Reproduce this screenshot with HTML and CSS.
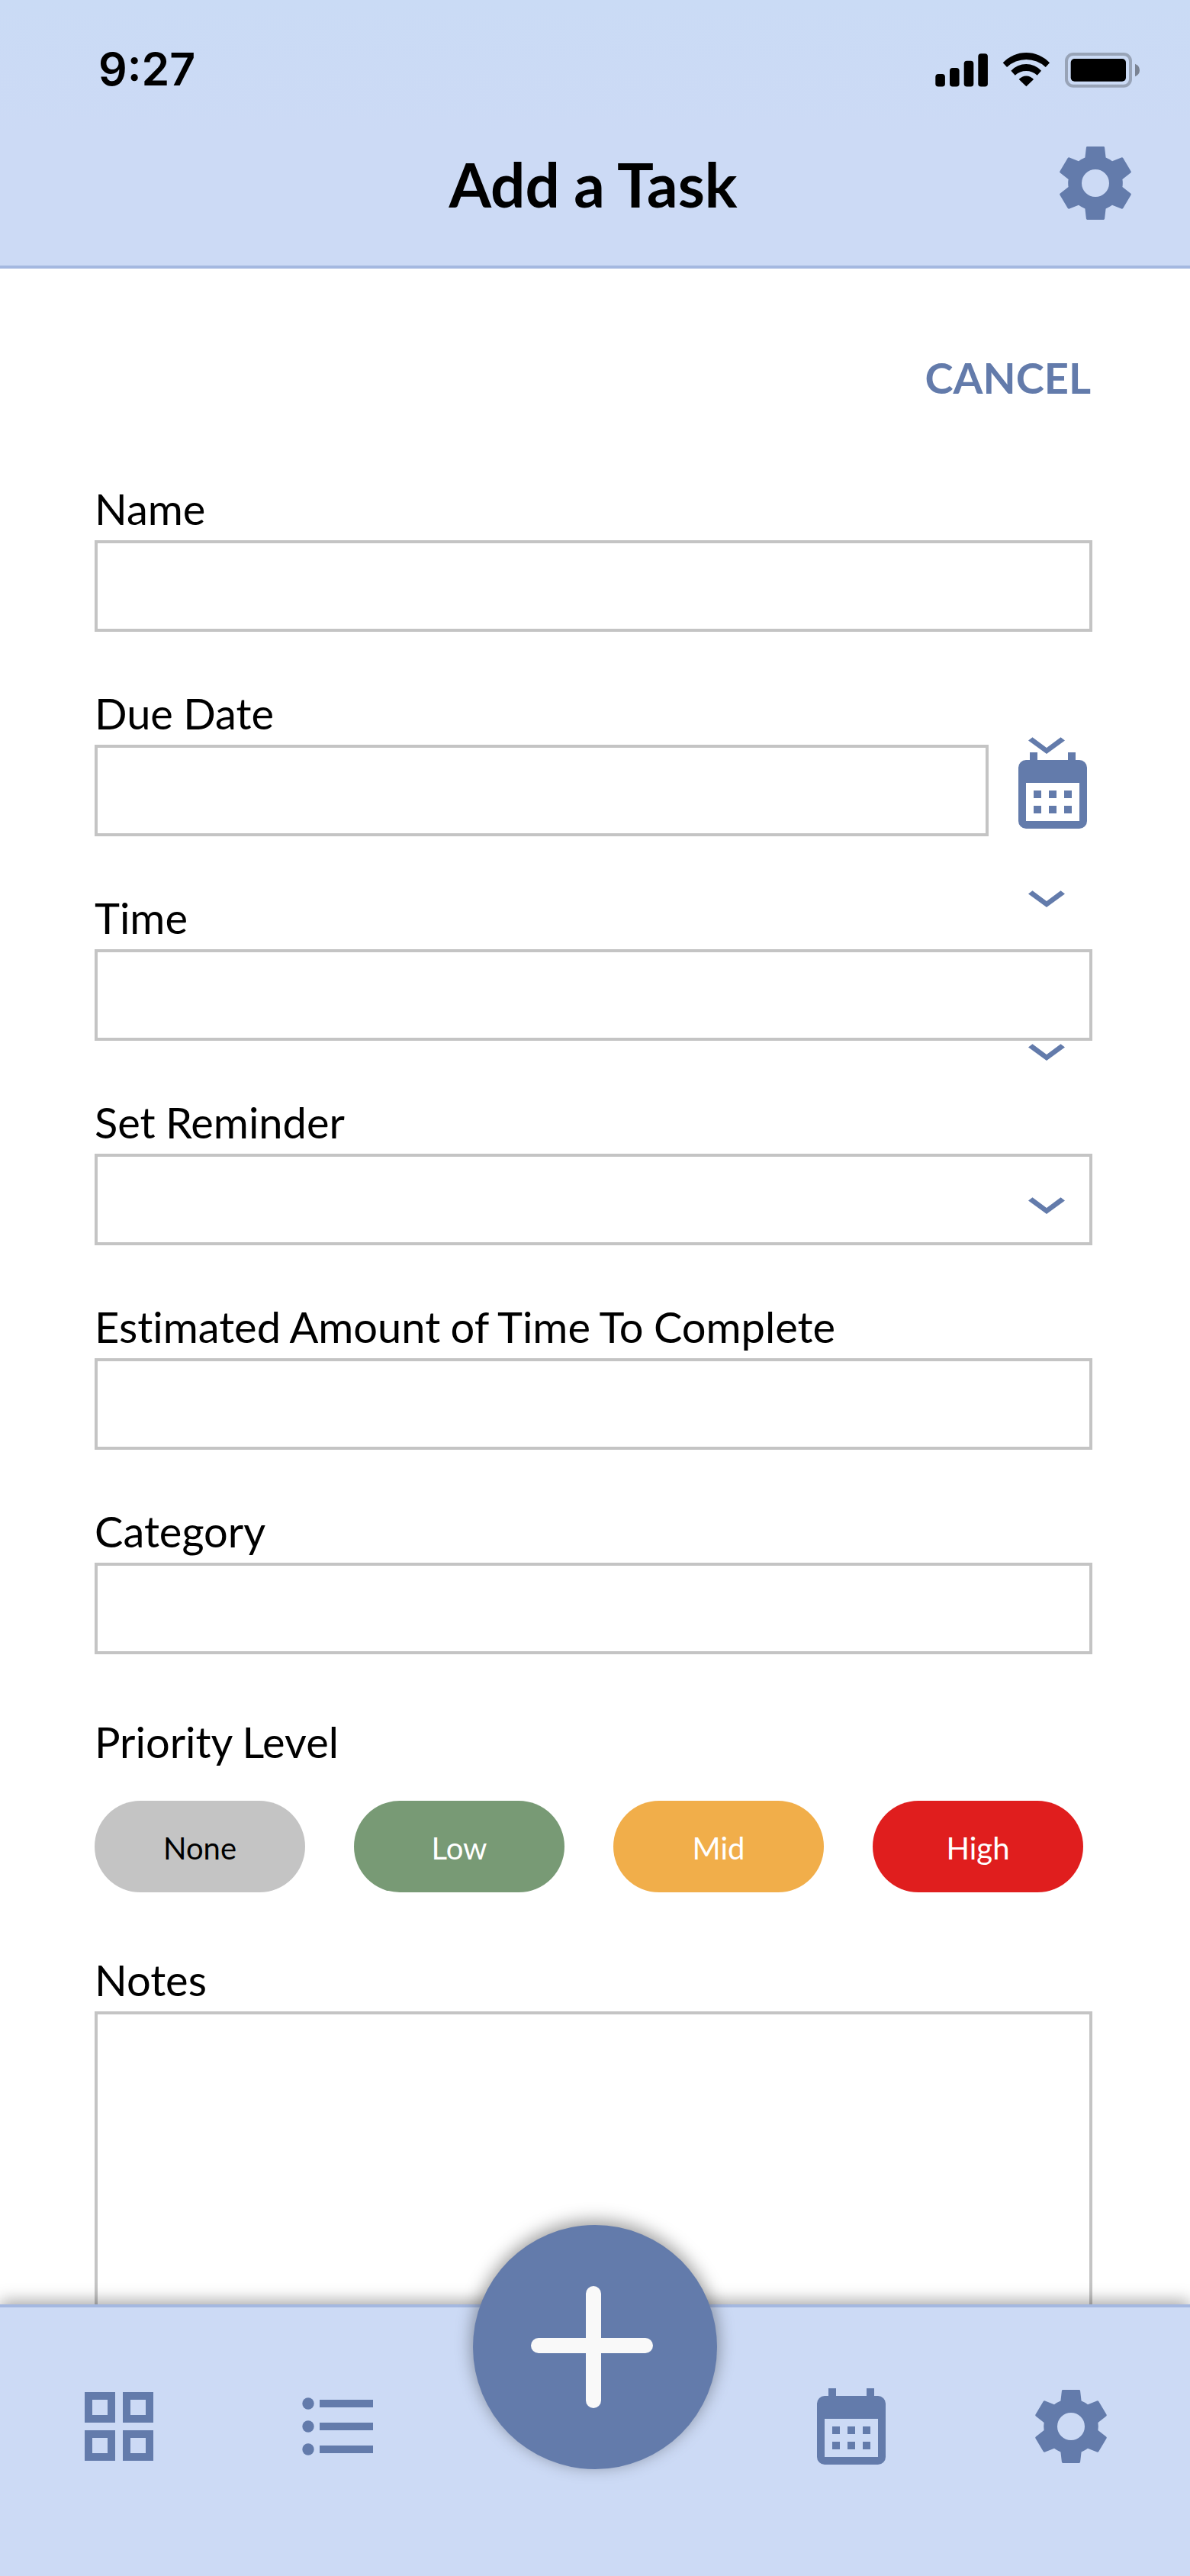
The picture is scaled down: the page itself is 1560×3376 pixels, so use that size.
FILE: index.html
```html
<!DOCTYPE html>
<html lang="en">
<head>
<meta charset="utf-8">
<title>Add a Task</title>
<link rel="stylesheet" href="styles.css">
</head>
<body>
<svg class="defs" aria-hidden="true">
  <symbol id="gear" viewBox="-60 -60 120 120">
    <path fill-rule="evenodd" d="M-10.6-48H10.6Q12-48 12.1-46.6L13.6-33.4Q18-31.6 22-28.7L34-33.6Q35.4-34 36.2-33L46.6-15.4Q47.2-14.2 46.2-13.4L35.4-5Q36.2 0 35.4 5L46.2 13.4Q47.2 14.2 46.6 15.4L36.2 33Q35.4 34 34 33.6L22 28.7Q18 31.6 13.6 33.4L12.1 46.6Q12 48 10.6 48H-10.6Q-12 48-12.1 46.6L-13.6 33.4Q-18 31.6-22 28.7L-34 33.6Q-35.4 34-36.2 33L-46.6 15.4Q-47.2 14.2-46.2 13.4L-35.4 5Q-36.2 0-35.4-5L-46.2-13.4Q-47.2-14.2-46.6-15.4L-36.2-33Q-35.4-34-34-33.6L-22-28.7Q-18-31.6-13.6-33.4L-12.1-46.6Q-12-48-10.6-48ZM0-18A18 18 0 1 0 0 18A18 18 0 1 0 0-18Z"/>
  </symbol>
  <symbol id="calendar" viewBox="0 0 120 120">
    <path fill-rule="evenodd" d="M30 10h10v10h40V10h10v10h5a10 10 0 0 1 10 10v70a10 10 0 0 1-10 10H25a10 10 0 0 1-10-10V30a10 10 0 0 1 10-10h5ZM25 50v50h70V50Z"/>
    <path d="M35 60h10v10H35ZM55 60h10v10H55ZM75 60h10v10H75ZM35 80h10v10H35ZM55 80h10v10H55ZM75 80h10v10H75Z"/>
  </symbol>
  <symbol id="chevron" viewBox="0 0 48 22">
    <path d="M0 4.4L5.5 .2 24 13.900 42.500 .2 48 4.400 24 22Z"/>
  </symbol>
</svg>
<div class="app">
  <header class="header">
    <div class="status">
      <span class="time">9:27</span>
      <svg class="indicators" viewBox="0 0 270 48" aria-hidden="true">
        <rect x="2.300" y="29" width="12.600" height="16.500" rx="3.800"/>
        <rect x="21" y="21" width="12.600" height="24.500" rx="3.800"/>
        <rect x="39.700" y="11.700" width="12.600" height="33.800" rx="3.800"/>
        <rect x="58.300" y="2.300" width="12.600" height="43.200" rx="3.800"/>
        <g transform="translate(90.700 1) scale(.33333)">
          <path d="M0 40A125.800 125.800 0 0 1 184 40L168 57A111 111 0 0 0 16 57Z"/>
          <path d="M32 71A81 81 0 0 1 151 71L135 89A64 64 0 0 0 48 89Z"/>
          <path d="M63 105A37.700 37.700 0 0 1 121 105L92 133Z"/>
        </g>
        <rect class="battery-shell" x="174" y="3" width="84" height="41.700" rx="9"/>
        <rect x="179.700" y="9" width="72.300" height="29.700" rx="5"/>
        <path class="battery-tip" d="M264 15.700Q270 18.300 270 24T264 32.300Z"/>
      </svg>
    </div>
    <div class="titlebar">
      <h1 class="title">Add a Task</h1>
      <svg class="icon"><use href="#gear"/></svg>
    </div>
  </header>

  <main class="main">
    <a class="cancel">CANCEL</a>
    <form class="form">
      <div class="field"><label class="label" for="name">Name</label><input class="box" id="name"></div>
      <div class="field">
        <label class="label" for="due">Due Date</label>
        <div class="date-row"><input class="box" id="due"><svg class="icon"><use href="#calendar"/></svg></div>
      </div>
      <div class="field"><label class="label" for="time">Time</label><input class="box" id="time"></div>
      <div class="field"><label class="label" for="reminder">Set Reminder</label><input class="box" id="reminder"></div>
      <div class="field"><label class="label" for="estimate">Estimated Amount of Time To Complete</label><input class="box" id="estimate"></div>
      <div class="field"><label class="label" for="category">Category</label><input class="box" id="category"></div>
      <div class="priority">
        <span class="label">Priority Level</span>
        <div class="pills">
          <span class="pill none">None</span>
          <span class="pill low">Low</span>
          <span class="pill mid">Mid</span>
          <span class="pill high">High</span>
        </div>
      </div>
      <div class="field notes"><label class="label" for="notes">Notes</label><textarea class="box" id="notes"></textarea></div>
    </form>
    <div class="chevrons">
      <svg class="chevron"><use href="#chevron"/></svg>
      <svg class="chevron"><use href="#chevron"/></svg>
      <svg class="chevron"><use href="#chevron"/></svg>
      <svg class="chevron"><use href="#chevron"/></svg>
    </div>
  </main>

  <nav class="nav">
    <svg class="icon" viewBox="0 0 120 120"><path fill-rule="evenodd" d="M15 15h40v40H15ZM25 25v20h20V25ZM65 15h40v40H65ZM75 25v20h20V25ZM15 65h40v40H15ZM25 75v20h20V75ZM65 65h40v40H65ZM75 75v20h20V75Z"/></svg>
    <svg class="icon" viewBox="0 0 120 120"><circle cx="20" cy="30" r="7.700"/><circle cx="20" cy="60" r="7.700"/><circle cx="20" cy="90" r="7.700"/><path d="M35 25h70v10H35ZM35 55h70v10H35ZM35 85h70v10H35Z"/></svg>
    <svg class="icon calendar-tab"><use href="#calendar"/></svg>
    <svg class="icon"><use href="#gear"/></svg>
    <div class="add">
      <svg viewBox="0 0 320 320"><path d="M158 90V230M86 158H226"/></svg>
    </div>
  </nav>
</div>
</body>
</html>
```
FILE: styles.css
```css
* { box-sizing: border-box; }

body {
  margin: 0;
  background: #fff;
  color: #000;
  font-family: Lato, "Open Sans", sans-serif;
  font-variant-ligatures: none;
  word-spacing: -1px;
}

.defs { position: absolute; width: 0; height: 0; }

.app {
  display: flex;
  flex-direction: column;
  width: 1560px;
  height: 3376px;
  overflow: hidden;
}

.icon {
  display: block;
  flex: none;
  width: 120px;
  height: 120px;
  fill: #637bab;
}

.header {
  flex: none;
  height: 352px;
  border-bottom: 4px solid #a4b8e0;
  background: linear-gradient(#cadbf5, #ccdaf5 50%, #ccdaf5);
}

.status {
  display: flex;
  justify-content: space-between;
  height: 176px;
  padding: 54px 66px 0 129px;
}

.time {
  margin-top: 1px;
  font: 600 59px/72px Inter, sans-serif;
}

.indicators { width: 270px; height: 48px; margin-top: 14px; }

.battery-shell { fill: none; stroke: #000; stroke-width: 4; opacity: .25; }
.battery-tip { opacity: .4; }

.titlebar {
  display: grid;
  grid-template-columns: 120px 1fr 120px;
  padding: 4px 64px 0;
}

.title {
  grid-column: 2;
  margin: 13px 0 0;
  padding-right: 5px;
  font-size: 80px;
  font-weight: 700;
  line-height: 96px;
  text-align: center;
}

.main {
  position: relative;
  flex: 1;
  min-height: 0;
  padding: 108px 128px 0 124px;
  overflow: hidden;
}

.cancel {
  display: block;
  margin-bottom: 102px;
  padding-right: 2px;
  color: #637bab;
  font-size: 56px;
  font-weight: 700;
  line-height: 70px;
  text-align: right;
}

.form { display: flex; flex-direction: column; gap: 72px; }

.field { display: flex; flex-direction: column; gap: 6px; }

.label { font-size: 56px; line-height: 70px; }

.box {
  display: block;
  width: 100%;
  height: 120px;
  margin: 0;
  border: 4px solid #c4c4c4;
  border-radius: 0;
  background: #fff;
  font: inherit;
  resize: none;
}

.date-row { display: flex; gap: 24px; margin-right: -8px; }

.priority { display: flex; flex-direction: column; gap: 42px; margin-top: 8px; }

.pills { display: flex; gap: 64px; }

.pill {
  width: 276px;
  height: 120px;
  border-radius: 60px;
  color: #fff;
  font-size: 40px;
  line-height: 124px;
  text-align: center;
}

.none { background: #c4c4c4; color: #000; }
.low { background: #789a75; }
.mid { background: #f1ae4a; }
.high { background: #e01e1e; }

.notes { margin-top: 8px; }
.notes .box { height: 600px; }

/* Dropdown markers float over the form, independent of the field rows. */
.chevrons {
  position: absolute;
  top: 614px;
  left: 1348px;
  display: flex;
  flex-direction: column;
  gap: 179px;
}

.chevron { display: block; width: 48px; height: 22px; fill: #637bab; }

.nav {
  position: relative;
  display: flex;
  flex: none;
  height: 356px;
  padding: 96px 96px 0;
  gap: 168px;
  border-top: 4px solid #a4b8e0;
  background: #ccdaf5;
  box-shadow: 0 -4px 20px rgba(0, 0, 0, .36);
}

.calendar-tab { margin-left: 384px; }

.add {
  position: absolute;
  top: -108px;
  left: 620px;
  width: 320px;
  height: 320px;
  border-radius: 50%;
  background: #637bab;
  box-shadow: 0 -5px 22px 1px rgba(0, 0, 0, .38);
}

.add path { fill: none; stroke: #f9f9f9; stroke-width: 20; stroke-linecap: round; }
```
